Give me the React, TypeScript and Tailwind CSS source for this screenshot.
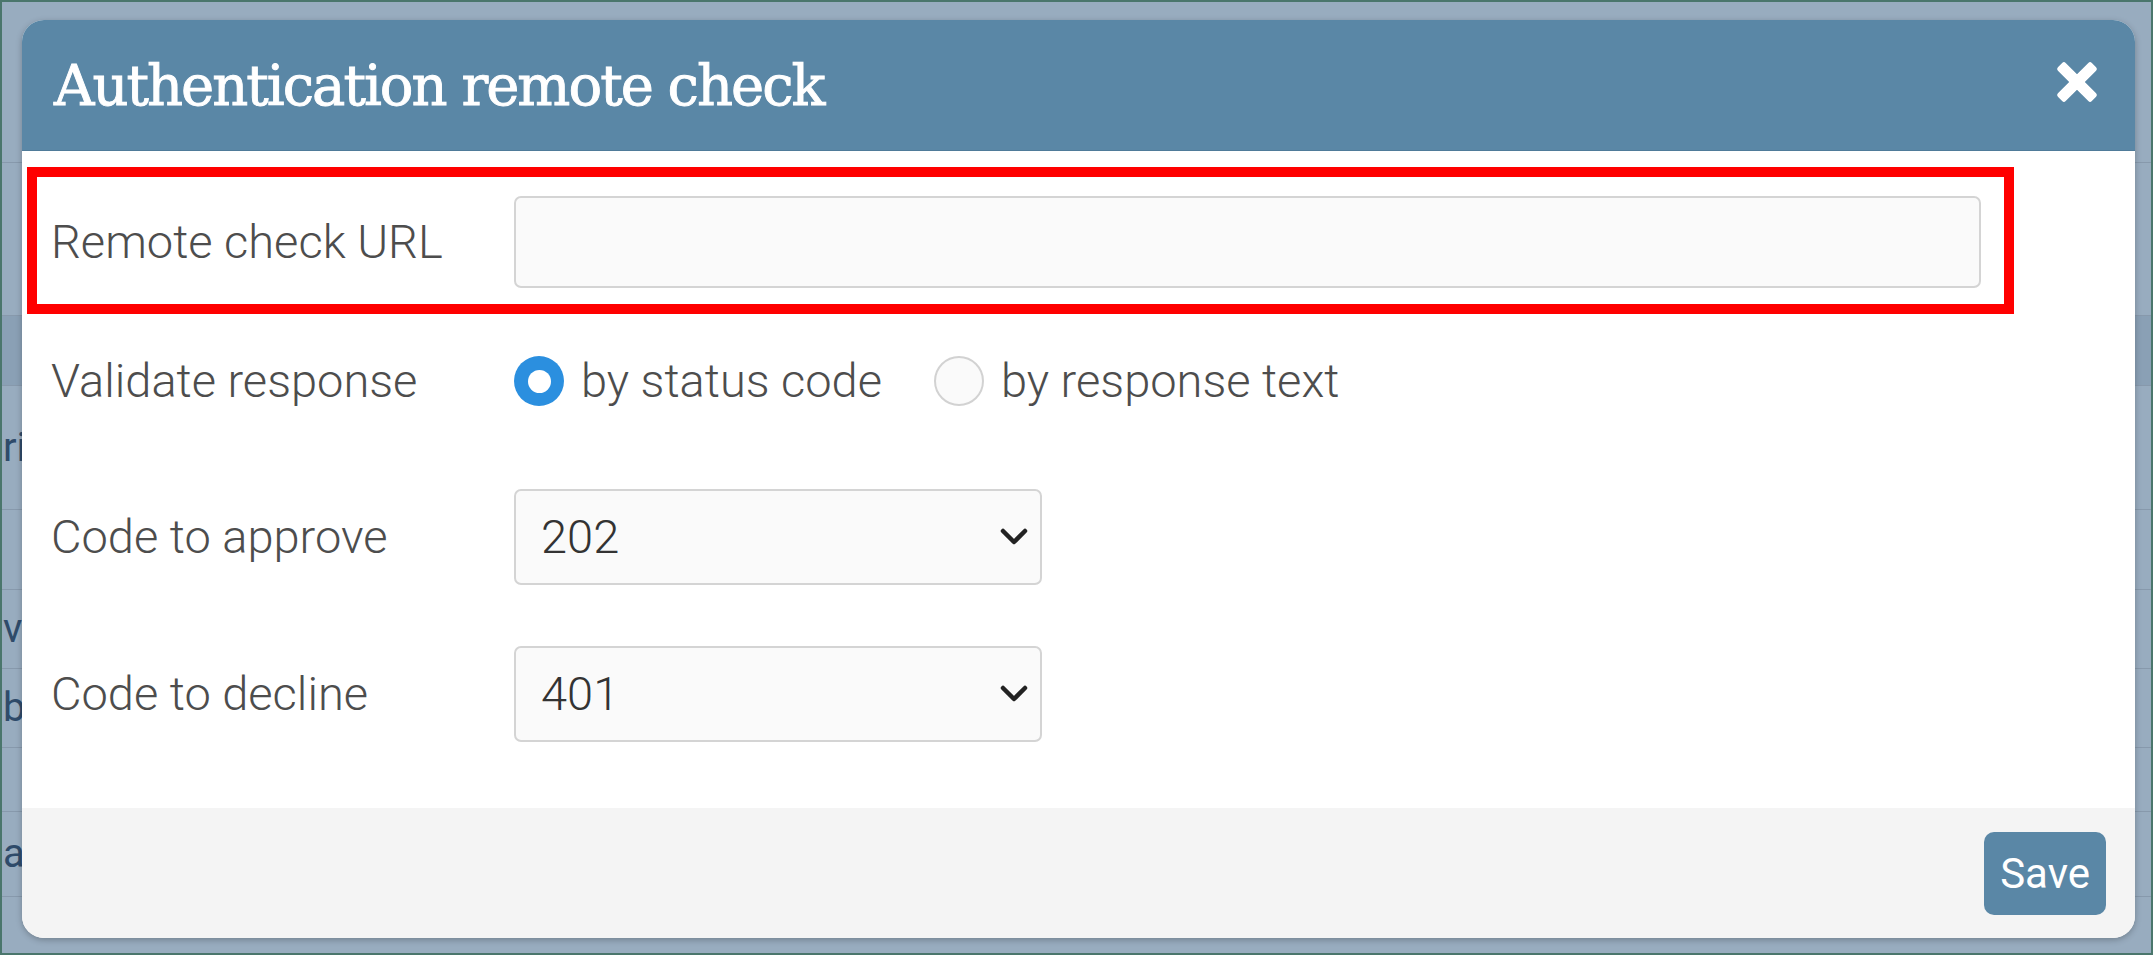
import React, { useState } from "react";

const LABEL =
  "w-[463px] shrink-0 text-[47px] font-light text-[#4d4d4d] font-['Roboto','Liberation_Sans',sans-serif]";

// rows of the page that sits behind the dialog
const BACK_ROWS: { h: string; text?: string; band?: boolean }[] = [
  { h: "h-[161px]" },
  { h: "h-[153px]" },
  { h: "h-[70px]", band: true },
  { h: "h-[124px]", text: "ri" },
  { h: "h-[80px]" },
  { h: "h-[79px]", text: "v" },
  { h: "h-[79px]", text: "b" },
  { h: "h-[64px]" },
  { h: "h-[85px]", text: "at" },
];

function CloseIcon() {
  return (
    <svg width="42" height="42" viewBox="0 0 42 42" fill="#fff">
      <rect x="15.5" y="-3" width="11" height="48" rx="2.5" transform="rotate(45 21 21)" />
      <rect x="15.5" y="-3" width="11" height="48" rx="2.5" transform="rotate(-45 21 21)" />
    </svg>
  );
}

function Chevron() {
  return (
    <svg width="28" height="18" viewBox="0 0 28 18" className="pointer-events-none absolute right-[14px] top-1/2 -translate-y-1/2">
      <polyline points="3,3 14,14 25,3" fill="none" stroke="#222" strokeWidth="4.5" strokeLinecap="round" strokeLinejoin="round" />
    </svg>
  );
}

function Radio({ checked, label, onClick }: { checked: boolean; label: string; onClick: () => void }) {
  return (
    <label onClick={onClick} className="flex items-center gap-[17px] cursor-pointer">
      {checked ? (
        <span className="w-[50px] h-[50px] rounded-full bg-[#2b8fdf] flex items-center justify-center">
          <span className="w-[23px] h-[23px] rounded-full bg-white" />
        </span>
      ) : (
        <span className="w-[50px] h-[50px] rounded-full border-2 border-[#d2d2d2] bg-[#fafafa]" />
      )}
      <span className="text-[47px] font-light text-[#4d4d4d]">{label}</span>
    </label>
  );
}

function CodeSelect({ value, options }: { value: string; options: string[] }) {
  return (
    <div className="relative w-[528px] h-[96px]">
      <select
        defaultValue={value}
        className="appearance-none w-full h-full rounded-[7px] border-2 border-[#d4d4d4] bg-[#fafafa] pl-[25px] text-[47px] font-light text-[#333] outline-none"
      >
        {options.map((o) => (
          <option key={o}>{o}</option>
        ))}
      </select>
      <Chevron />
    </div>
  );
}

export default function App() {
  const [mode, setMode] = useState<"status" | "text">("status");

  return (
    <div className="relative w-[2153px] h-[955px] overflow-hidden border-2 border-[#4a766c] bg-[#98acbf] font-['Roboto','Liberation_Sans',sans-serif]">
      {/* page behind the modal */}
      <div className="flex flex-col">
        {BACK_ROWS.map((r, i) => (
          <div
            key={i}
            className={[
              "flex items-center border-b border-[#8799ac] text-[40px] text-[#2f4b6a] pl-[1px]",
              r.h,
              r.band ? "bg-[#8aa0b5]" : "",
            ].join(" ")}
          >
            {r.text}
          </div>
        ))}
      </div>

      {/* dialog */}
      <div className="absolute left-[20px] top-[18px] w-[2113px] h-[918px] rounded-[22px] overflow-hidden bg-white shadow-[0_2px_6px_rgba(0,0,0,0.25)] flex flex-col">
        <div className="h-[131px] shrink-0 bg-[#5a87a6] border-b border-[#4f7b99] flex items-center justify-between pl-[32px] pr-[37px]">
          <h1 className="text-[56px] tracking-[-2px] text-white font-['DejaVu_Serif','Liberation_Serif',serif] pt-[2px] [-webkit-text-stroke:0.9px_white]">
            Authentication remote check
          </h1>
          <button className="cursor-pointer mt-[-6px]">
            <CloseIcon />
          </button>
        </div>

        <div className="relative flex-1 pt-[45px] pb-[65px] px-[29px]">
          {/* red highlight around the first field */}
          <div className="pointer-events-none absolute left-[5px] top-[16px] w-[1987px] h-[147px] border-[10px] border-[#ff0000]" />

          <div className="flex items-center h-[92px]">
            <span className={LABEL}>Remote check URL</span>
            <input
              type="text"
              className="w-[1467px] h-full rounded-[7px] border-2 border-[#d4d4d4] bg-[#fafafa] px-[25px] text-[46px] outline-none"
            />
          </div>

          <div className="flex items-center h-[96px] mt-[45px]">
            <span className={LABEL}>Validate response</span>
            <div className="flex items-center gap-[52px]">
              <Radio checked={mode === "status"} label="by status code" onClick={() => setMode("status")} />
              <Radio checked={mode === "text"} label="by response text" onClick={() => setMode("text")} />
            </div>
          </div>

          <div className="flex items-center h-[96px] mt-[60px]">
            <span className={LABEL}>Code to approve</span>
            <CodeSelect value="202" options={["200", "201", "202", "204"]} />
          </div>

          <div className="flex items-center h-[96px] mt-[61px]">
            <span className={LABEL}>Code to decline</span>
            <CodeSelect value="401" options={["400", "401", "403", "404"]} />
          </div>
        </div>

        <div className="h-[130px] shrink-0 bg-[#f4f4f4] flex items-center justify-end pr-[29px]">
          <button className="cursor-pointer h-[83px] px-[16px] rounded-[10px] bg-[#5a87a6] text-white text-[42px]">
            Save
          </button>
        </div>
      </div>
    </div>
  );
}
